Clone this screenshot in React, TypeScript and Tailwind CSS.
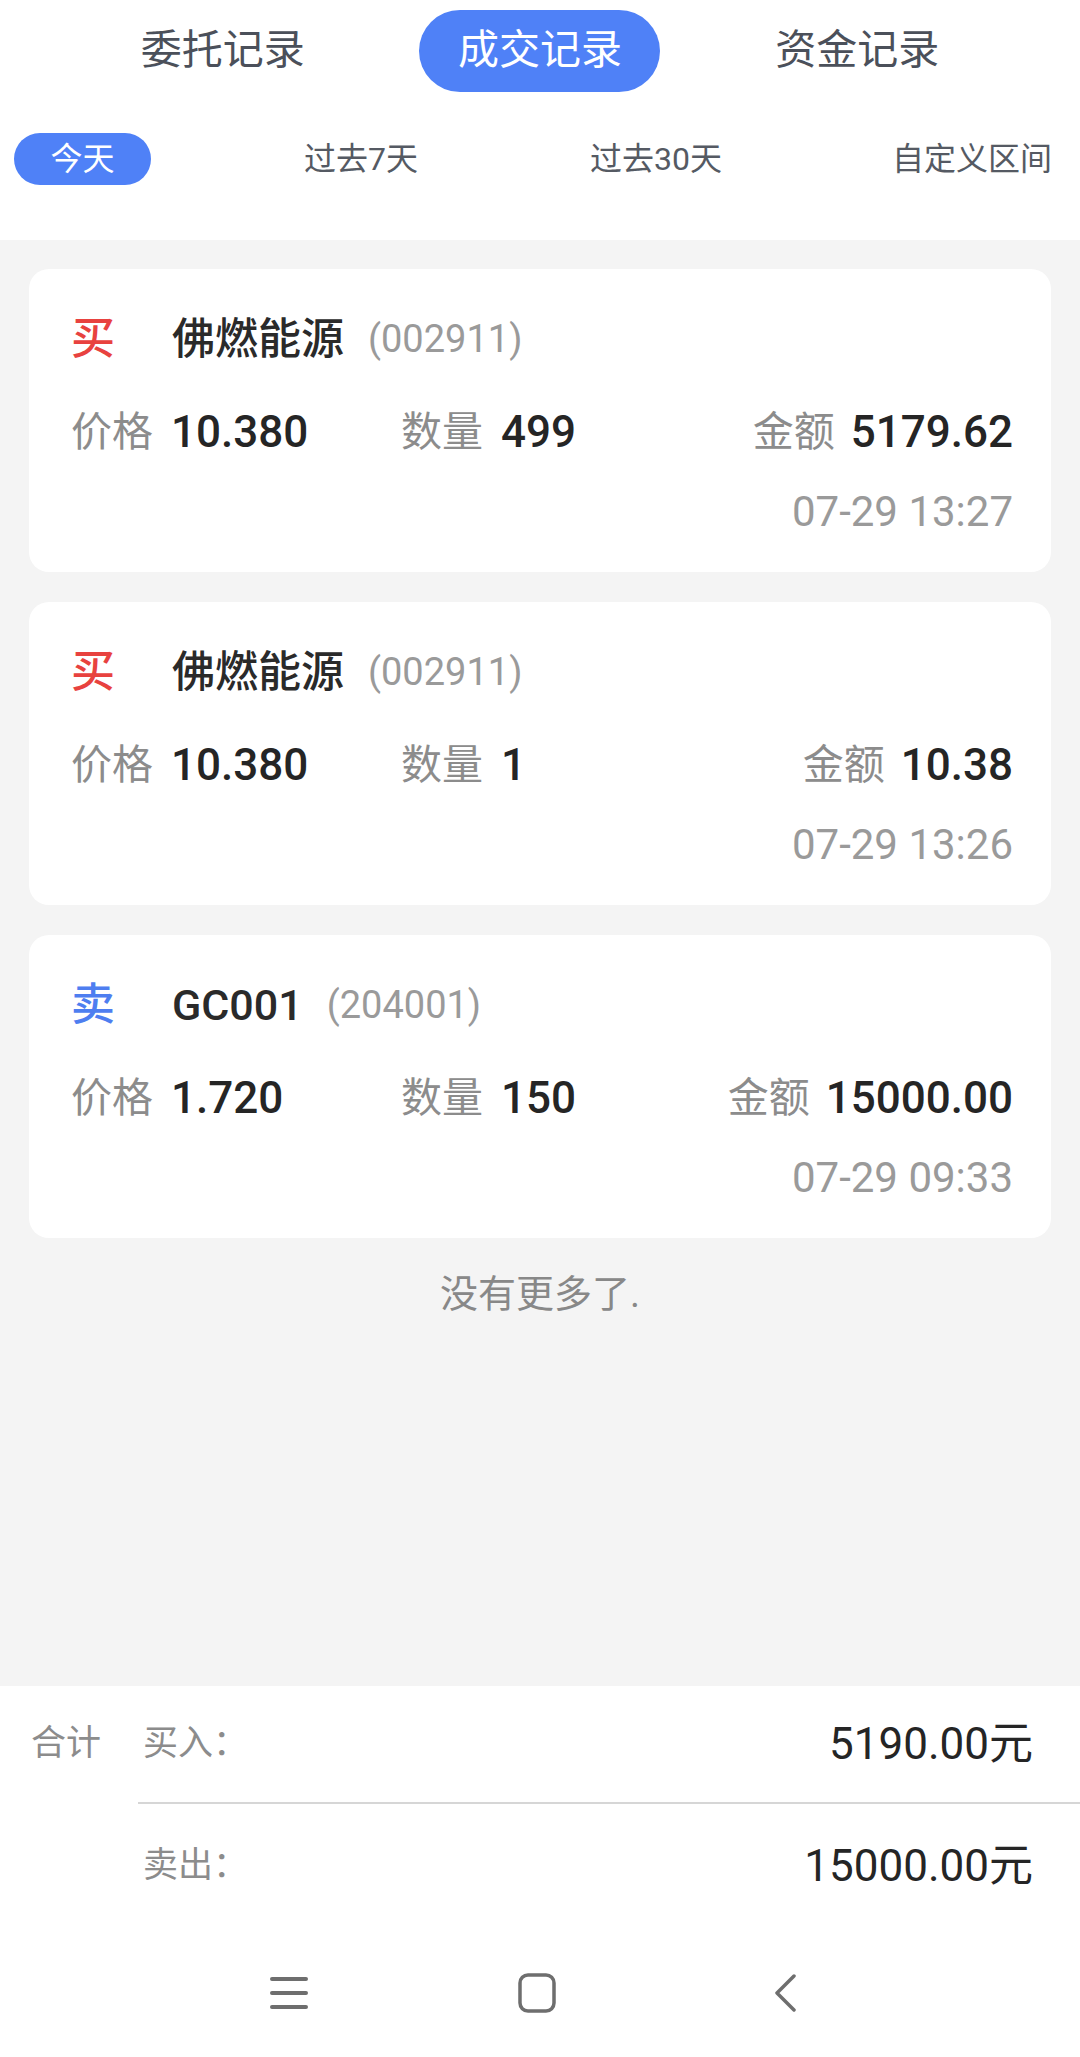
import React from "react";

type Trade = {
  side: "buy" | "sell";
  name: string;
  code: string;
  price: string;
  qty: string;
  amount: string;
  time: string;
};

const trades: Trade[] = [
  { side: "buy", name: "佛燃能源", code: "002911", price: "10.380", qty: "499", amount: "5179.62", time: "07-29 13:27" },
  { side: "buy", name: "佛燃能源", code: "002911", price: "10.380", qty: "1", amount: "10.38", time: "07-29 13:26" },
  { side: "sell", name: "GC001", code: "204001", price: "1.720", qty: "150", amount: "15000.00", time: "07-29 09:33" },
];

const topTabs = ["委托记录", "成交记录", "资金记录"];

function TradeCard({ t }: { t: Trade }) {
  const isBuy = t.side === "buy";
  return (
    <div className="h-[303px] rounded-[20px] bg-white pl-[42px] pr-[38px] pt-[45px]">
      <div className="flex h-[50px] items-center">
        <span
          className={
            "w-[101px] text-[44px] font-medium leading-none " +
            (isBuy ? "text-[#e8423f]" : "text-[#4e7ef0]")
          }
        >
          {isBuy ? "买" : "卖"}
        </span>
        <span className="text-[43px] font-medium leading-none text-[#2a2a2a]">{t.name}</span>
        <span className="ml-[24px] text-[38px] leading-none text-[#9a9a9a]">({t.code})</span>
      </div>
      <div className="mt-[43px] flex h-[50px] items-center">
        <div className="flex w-[330px] items-center">
          <span className="text-[41px] leading-none text-[#8c8c8c]">价格</span>
          <span className="ml-[18px] text-[44px] font-medium leading-none text-[#252525]">{t.price}</span>
        </div>
        <div className="flex flex-1 items-center">
          <span className="text-[41px] leading-none text-[#8c8c8c]">数量</span>
          <span className="ml-[18px] text-[44px] font-medium leading-none text-[#252525]">{t.qty}</span>
        </div>
        <div className="flex items-center">
          <span className="text-[41px] leading-none text-[#8c8c8c]">金额</span>
          <span className="ml-[16px] text-[44px] font-medium leading-none text-[#252525]">{t.amount}</span>
        </div>
      </div>
      <div className="mt-[33px] flex h-[44px] items-center justify-end text-[42px] leading-none text-[#9a9a9a]">
        {t.time}
      </div>
    </div>
  );
}

export default function App() {
  return (
    <div
      className="flex h-[2057px] w-[1080px] flex-col overflow-hidden bg-[#f4f4f4]"
      style={{ fontFamily: 'Roboto, "Noto Sans CJK SC", sans-serif' }}
    >
      {/* header tabs */}
      <div className="h-[240px] bg-white pt-[10px]">
        <div className="grid grid-cols-3 px-[64px]">
          {topTabs.map((tab, i) => (
            <div key={tab} className="flex justify-center">
              <div
                className={
                  "flex h-[82px] w-[241px] items-center justify-center rounded-full text-[41px] " +
                  (i === 1 ? "bg-[#4f81f7] text-white" : "text-[#4b505a]")
                }
              >
                {tab}
              </div>
            </div>
          ))}
        </div>
        <div className="mt-[41px] flex h-[52px] items-center pl-[14px] text-[32px] text-[#555a63]">
          <div className="flex h-[52px] w-[137px] items-center justify-center rounded-full bg-[#4f81f7] text-white">
            今天
          </div>
          <span className="ml-[153px]">过去7天</span>
          <span className="ml-[172px]">过去30天</span>
          <span className="ml-auto pr-[28px]">自定义区间</span>
        </div>
      </div>

      {/* trade list */}
      <div className="flex flex-1 flex-col gap-[30px] px-[29px] pt-[29px]">
        {trades.map((t, i) => (
          <TradeCard key={i} t={t} />
        ))}
        <div className="pt-[6px] text-center text-[38px] leading-[40px] text-[#888888]">
          没有更多了.
        </div>
      </div>

      {/* summary */}
      <div className="flex bg-white">
        <div className="w-[138px] pl-[31px]">
          <div className="flex h-[116px] items-center text-[35px] text-[#8c8c8c]">合计</div>
        </div>
        <div className="flex-1">
          <div className="flex h-[116px] items-center justify-between pl-[5px] pr-[47px]">
            <span className="text-[35px] text-[#8c8c8c]">买入：</span>
            <span className="text-[44px] text-[#252525]">5190.00元</span>
          </div>
          <div className="border-t-2 border-[#d6d6d6]" />
          <div className="flex h-[124px] items-center justify-between pl-[5px] pr-[47px]">
            <span className="text-[35px] text-[#8c8c8c]">卖出：</span>
            <span className="text-[44px] text-[#252525]">15000.00元</span>
          </div>
        </div>
      </div>

      {/* system nav bar */}
      <div className="flex h-[129px] items-center bg-white pl-[165px]">
        <div className="flex w-[248px] justify-center">
          <svg width="38" height="34" viewBox="0 0 38 34" className="text-[#6e6e6e]">
            <path d="M2 3h34M2 17h34M2 31h34" stroke="currentColor" strokeWidth="4" strokeLinecap="round" />
          </svg>
        </div>
        <div className="flex w-[248px] justify-center">
          <svg width="38" height="40" viewBox="0 0 38 40" className="text-[#6e6e6e]">
            <rect x="2" y="2" width="34" height="36" rx="8" fill="none" stroke="currentColor" strokeWidth="3.5" />
          </svg>
        </div>
        <div className="flex w-[248px] justify-center">
          <svg width="24" height="38" viewBox="0 0 24 38" className="text-[#6e6e6e]">
            <path d="M21 2L4 19l17 17" fill="none" stroke="currentColor" strokeWidth="3.5" strokeLinecap="round" strokeLinejoin="round" />
          </svg>
        </div>
      </div>
    </div>
  );
}
